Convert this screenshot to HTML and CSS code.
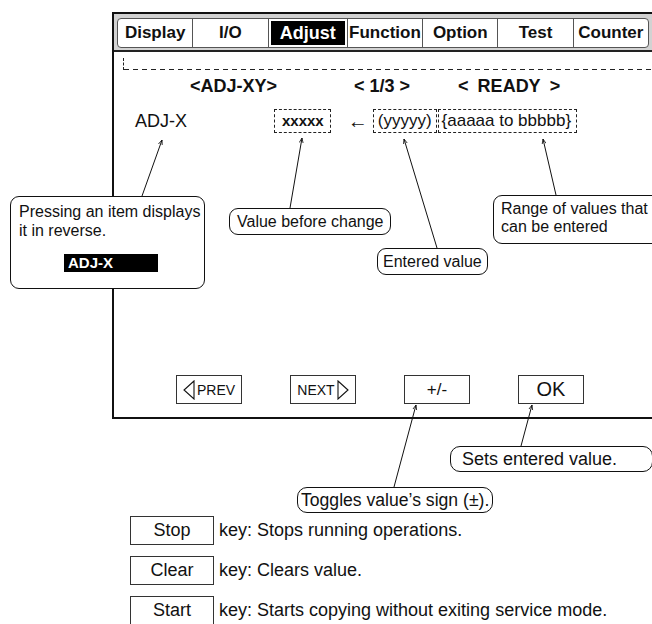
FILE: index.html
```html
<!DOCTYPE html>
<html lang="en">
<head>
    <meta charset="UTF-8">
    <title>Adjust screen</title>
    <link rel="stylesheet" href="styles.css">
</head>
<body>
    <div id="page">
        <div class="screen">
            <div class="header">
                <ul class="tabs">
                    <li class="tab">Display</li>
                    <li class="tab">I/O</li>
                    <li class="tab active"><span>Adjust</span></li>
                    <li class="tab">Function</li>
                    <li class="tab">Option</li>
                    <li class="tab">Test</li>
                    <li class="tab">Counter</li>
                </ul>
            </div>
            <div class="msg"></div>
            <div class="title-row">
                <span class="t-name">&lt;ADJ-XY&gt;</span>
                <span class="t-page">&lt; 1/3 &gt;</span>
                <span class="t-state">&lt;&ensp;READY&ensp;&gt;</span>
            </div>
            <div class="item-row">
                <span class="item-name">ADJ-X</span>
                <span class="field now">xxxxx</span>
                <span class="arrow">&larr;</span>
                <span class="field entered">(yyyyy)</span>
                <span class="field range">{aaaaa to bbbbb}</span>
            </div>
            <div class="btn-row">
                <span class="btn small">
                    <svg class="tri" width="12" height="20" viewBox="0 0 12 20"><path d="M11,1 L1,10 L11,19 Z" fill="none" stroke="#111" stroke-width="1.1"/></svg>PREV
                </span>
                <span class="btn small">
                    NEXT<svg class="tri" width="12" height="20" viewBox="0 0 12 20"><path d="M1,1 L11,10 L1,19 Z" fill="none" stroke="#111" stroke-width="1.1"/></svg>
                </span>
                <span class="btn sign">+/-</span>
                <span class="btn ok">OK</span>
            </div>
        </div>

        <ul class="keys">
            <li><span class="key">Stop</span>key: Stops running operations.</li>
            <li><span class="key">Clear</span>key: Clears value.</li>
            <li><span class="key">Start</span>key: Starts copying without exiting service mode.</li>
        </ul>

        <!-- leader lines -->
        <svg class="leaders" width="652" height="624" viewBox="0 0 652 624">
            <defs>
                <marker id="tip" markerWidth="6" markerHeight="6" refX="5" refY="3" orient="auto">
                    <path d="M0,1 L5,3 L0,5" fill="none" stroke="#111" stroke-width="0.8"/>
                </marker>
            </defs>
            <g stroke="#111" stroke-width="1">
                <line x1="142" y1="196" x2="162" y2="140" marker-end="url(#tip)"/>
                <line x1="290" y1="208" x2="302" y2="138" marker-end="url(#tip)"/>
                <line x1="437" y1="248" x2="404" y2="139" marker-end="url(#tip)"/>
                <line x1="556" y1="195" x2="543" y2="139" marker-end="url(#tip)"/>
                <line x1="394" y1="487" x2="416" y2="405" marker-end="url(#tip)"/>
                <line x1="521" y1="446" x2="532" y2="405" marker-end="url(#tip)"/>
            </g>
        </svg>

        <div class="note note-press">
            <p>Pressing an item displays<br>it in reverse.</p>
            <span class="inverse">ADJ-X</span>
        </div>
        <div class="note note-before">Value before change</div>
        <div class="note note-entered">Entered value</div>
        <div class="note note-range">Range of values that<br>can be entered</div>
        <div class="note note-sign">Toggles value&rsquo;s sign (&plusmn;).</div>
        <div class="note note-set">Sets entered value.</div>
    </div>
</body>
</html>
```

FILE: styles.css
```css
*{
    margin: 0;
    padding: 0;
}
ul{
    list-style: none;
}
html,body{
    background: #fff;
    overflow: hidden;
}
#page{
    width: 652px;
    height: 624px;
    position: relative;
    overflow: hidden;
    font-family: "Liberation Sans", Arial, sans-serif;
    color: #111;
}

/* screen frame */
.screen{
    width: 560px;
    height: 403px;
    margin: 12px 0 0 112px;
    border: 2px solid #111;
    border-right: none;
}
.header{
    background: #d2d2d2;
    padding: 4px 0 2px 3px;
    border-bottom: 2px solid #222;
}
.tabs{
    width: 530px;
    height: 28px;
    display: flex;
    background: #fff;
    border: 1px solid #555;
    border-radius: 4px;
}
.tab{
    flex: 1 1 0;
    border-right: 1px solid #555;
    font-weight: bold;
    font-size: 17px;
    line-height: 28px;
    text-align: center;
}
.tab:last-child{
    border-right: none;
}
.tab.active{
    padding: 2px;
}
.tab.active span{
    display: block;
    background: #000;
    color: #fff;
    font-size: 18px;
    line-height: 24px;
}
.msg{
    height: 12px;
    margin: 6px 2px 0 9px;
    border-left: 1px dashed #222;
    border-right: 1px dashed #222;
    background: repeating-linear-gradient(to right, #222 0 5px, transparent 5px 9px) left bottom / 100% 1px no-repeat;
}
.title-row{
    display: flex;
    margin-top: 6px;
    padding-left: 76px;
    font-weight: bold;
    font-size: 18px;
    line-height: 20px;
}
.t-page{
    margin-left: 77px;
}
.t-state{
    margin-left: 48px;
}
.item-row{
    display: flex;
    align-items: center;
    margin-top: 13px;
    padding-left: 21px;
    font-size: 17px;
}
.item-name{
    font-size: 18px;
    width: 139px;
}
.field{
    height: 22px;
    line-height: 22px;
    border: 1px dashed #222;
}
.field.now{
    font-weight: bold;
    font-size: 15px;
    padding: 0 6px 0 7px;
}
.arrow{
    margin: 0 5px 0 17px;
    font-size: 20px;
    line-height: 22px;
}
.field.entered{
    padding: 0 4px;
}
.field.range{
    margin-left: 1px;
    padding: 0 5px 0 3px;
}
.btn-row{
    display: flex;
    gap: 48px;
    margin-top: 242px;
    padding-left: 62px;
}
.btn{
    display: flex;
    align-items: center;
    justify-content: center;
    width: 64px;
    height: 27px;
    border: 1px solid #333;
}
.btn.small{
    font-size: 14px;
    gap: 2px;
}
.btn.sign{
    font-size: 17px;
}
.btn.ok{
    font-size: 20px;
}

/* keys below the screen */
.keys{
    margin: 97px 0 0 130px;
    font-size: 18px;
}
.keys li{
    display: flex;
    align-items: center;
    height: 28px;
    margin-bottom: 12px;
}
.key{
    width: 82px;
    height: 27px;
    line-height: 27px;
    text-align: center;
    border: 1px solid #333;
    margin-right: 5px;
}

/* callouts */
.leaders{
    position: absolute;
    left: 0;
    top: 0;
}
.note{
    position: absolute;
    background: #fff;
    border: 1.5px solid #111;
    border-radius: 9px;
    font-size: 16px;
    line-height: 19px;
    padding: 4px 6px;
}
.note-press{
    left: 10px;
    top: 196px;
    width: 185px;
    height: 86px;
    padding: 5px 0 0 8px;
}
.inverse{
    display: block;
    width: 90px;
    margin: 14px 0 0 45px;
    padding-left: 4px;
    background: #000;
    color: #fff;
    font-weight: bold;
    font-size: 15px;
    line-height: 18px;
}
.note-before{
    left: 229px;
    top: 208px;
    padding: 3px 7px;
}
.note-entered{
    left: 377px;
    top: 248px;
    padding: 3px 5px;
}
.note-range{
    left: 493px;
    top: 195px;
    width: 170px;
    height: 43px;
    padding: 4px 0 0 7px;
    line-height: 18px;
}
.note-sign{
    left: 297px;
    top: 487px;
    padding: 2px 3px;
    font-size: 17.6px;
    line-height: 20px;
    border-radius: 10px;
}
.note-set{
    left: 450px;
    top: 446px;
    width: 170px;
    padding: 2px 20px 2px 11px;
    font-size: 18px;
    line-height: 20px;
    border-radius: 10px;
}
```
